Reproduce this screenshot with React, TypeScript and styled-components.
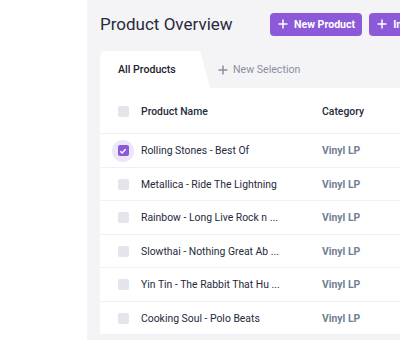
import { createGlobalStyle, styled } from "styled-components";

const GlobalStyle = createGlobalStyle`
    html, body {
        margin: 0;
        padding: 0;
        background: #ffffff;
        font-family: Roboto, "Liberation Sans", sans-serif;
    }
    * {
        box-sizing: border-box;
    }
`;

const Page = styled.div`
    display: flex;
    width: 400px;
    height: 340px;
    overflow: hidden;
`;

const Sidebar = styled.div`
    flex: 0 0 87px;
    background: #ffffff;
`;

const Main = styled.div`
    flex: 1;
    min-width: 0;
    display: flex;
    flex-direction: column;
    background: #f4f4f7;
    padding: 12px 0 0 13px;
`;

const Header = styled.div`
    display: flex;
    align-items: center;
    height: 24px;
    white-space: nowrap;
    h1 {
        margin: 0;
        font-size: 17px;
        font-weight: 400;
        color: #262a3b;
        flex: 0 0 170px;
    }
`;

const Actions = styled.div`
    display: flex;
    gap: 7px;
`;

const PrimaryButton = styled.button`
    display: flex;
    align-items: center;
    gap: 6px;
    height: 23px;
    padding: 0 7px 0 8px;
    border: none;
    border-radius: 4px;
    background: #8c5ad8;
    color: #ffffff;
    font-family: Roboto, "Liberation Sans", sans-serif;
    font-size: 10.6px;
    font-weight: 700;
    white-space: nowrap;
    flex-shrink: 0;
`;

const Tabs = styled.div`
    display: flex;
    align-items: stretch;
    height: 37px;
    margin-top: 15px;
`;

const ActiveTab = styled.div`
    position: relative;
    display: flex;
    align-items: center;
    width: 98px;
    padding-left: 18px;
    background: #ffffff;
    border-radius: 6px 0 0 0;
    font-size: 10.6px;
    font-weight: 500;
    color: #1f2230;
    &::after {
        content: "";
        position: absolute;
        top: 0;
        right: -12px;
        width: 14px;
        height: 100%;
        background: #ffffff;
        border-top-right-radius: 6px;
        clip-path: polygon(0 0, 30% 0, 100% 100%, 0 100%);
    }
`;

const GhostTab = styled.div`
    display: flex;
    align-items: center;
    gap: 5px;
    padding-left: 20px;
    font-size: 10.6px;
    color: #8a8f9d;
`;

const Table = styled.div`
    background: #ffffff;
    display: flex;
    flex-direction: column;
`;

const Row = styled.div<{ $head?: boolean }>`
    display: grid;
    grid-template-columns: 41px 181px 1fr;
    align-items: center;
    height: ${({ $head }) => ($head ? "46px" : "33.5px")};
    padding-top: ${({ $head }) => ($head ? "2px" : "1px")};
    border-bottom: 1px solid #eef0f3;
    font-size: 10.4px;
    font-weight: ${({ $head }) => ($head ? 500 : 400)};
    color: #262a3b;
    white-space: nowrap;
`;

const CheckCell = styled.div`
    display: flex;
    align-items: center;
    justify-content: center;
    padding-left: 5px;
`;

const Halo = styled.span<{ $on?: boolean }>`
    display: flex;
    align-items: center;
    justify-content: center;
    width: 22px;
    height: 22px;
    border-radius: 50%;
    background: ${({ $on }) => ($on ? "#ede5fa" : "transparent")};
`;

const Box = styled.span<{ $on?: boolean }>`
    display: flex;
    align-items: center;
    justify-content: center;
    width: 11px;
    height: 11px;
    border-radius: 2px;
    background: ${({ $on }) => ($on ? "#8c5ad8" : "#e3e5ea")};
`;

const Category = styled.span`
    font-weight: 700;
    color: #717f93;
`;

const Plus = ({ color, size = 10 }: { color: string; size?: number }) => (
    <svg width={size} height={size} viewBox="0 0 10 10">
        <path d="M5 0.5v9M0.5 5h9" stroke={color} strokeWidth="1.5" />
    </svg>
);

const Check = () => (
    <svg width="8" height="8" viewBox="0 0 8 8">
        <path d="M1.3 4.2l1.8 1.7 3.6-3.6" stroke="#fff" strokeWidth="1.4" fill="none" />
    </svg>
);

const products = [
    "Rolling Stones - Best Of",
    "Metallica - Ride The Lightning",
    "Rainbow - Long Live Rock n ...",
    "Slowthai - Nothing Great Ab ...",
    "Yin Tin - The Rabbit That Hu ...",
    "Cooking Soul - Polo Beats",
];

export default function App() {
    return (
        <Page>
            <GlobalStyle />
            <Sidebar />
            <Main>
                <Header>
                    <h1>Product Overview</h1>
                    <Actions>
                        <PrimaryButton><Plus color="#fff" />New Product</PrimaryButton>
                        <PrimaryButton><Plus color="#fff" />Import</PrimaryButton>
                    </Actions>
                </Header>
                <Tabs>
                    <ActiveTab>All Products</ActiveTab>
                    <GhostTab><Plus color="#8a8f9d" />New Selection</GhostTab>
                </Tabs>
                <Table>
                    <Row $head>
                        <CheckCell><Halo><Box /></Halo></CheckCell>
                        <span>Product Name</span>
                        <span>Category</span>
                    </Row>
                    {products.map((name, i) => (
                        <Row key={name}>
                            <CheckCell>
                                <Halo $on={i === 0}><Box $on={i === 0}>{i === 0 && <Check />}</Box></Halo>
                            </CheckCell>
                            <span>{name}</span>
                            <Category>Vinyl LP</Category>
                        </Row>
                    ))}
                </Table>
            </Main>
        </Page>
    );
}
